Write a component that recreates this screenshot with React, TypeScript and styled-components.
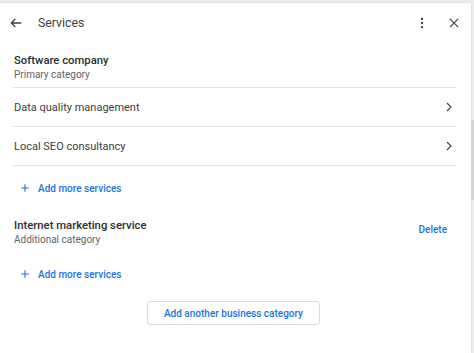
import React from 'react';
import styled, { createGlobalStyle } from 'styled-components';

const GlobalStyle = createGlobalStyle`
  html, body {
    margin: 0;
    padding: 0;
    background: #ececec;
    font-family: Roboto, "Liberation Sans", Arial, sans-serif;
  }
`

const Page = styled.div`
  display: flex;
  width: 474px;
  height: 353px;
  overflow: hidden;
`

const Dialog = styled.div`
  width: 471px;
  margin-top: 3px;
  background: #fff;
  box-shadow: 0 0 2px rgba(0, 0, 0, 0.12);
  display: flex;
  flex-direction: column;
`

const Track = styled.div`
  flex: 1;
  padding-top: 120px;
`

const Thumb = styled.div`
  height: 80px;
  background: #d4d4d4;
`

const Header = styled.div`
  height: 40px;
  display: flex;
  align-items: center;
  padding: 0 10px 0 9px;
`

const IconButton = styled.button`
  width: 14px;
  height: 14px;
  padding: 0;
  border: 0;
  background: none;
  display: flex;
  align-items: center;
  justify-content: center;
  color: #3c4043;
`

const Title = styled.div`
  flex: 1;
  margin-left: 15px;
  font-size: 12.3px;
  color: #3c4043;
`

const HeaderActions = styled.div`
  display: flex;
  align-items: center;
  gap: 18px;
`

const Body = styled.div`
  padding: 0 15px 0 13px;
  display: flex;
  flex-direction: column;
`

const CategoryHead = styled.div<{ $divider?: boolean }>`
  display: flex;
  align-items: flex-start;
  justify-content: space-between;
  padding: ${(p) => (p.$divider ? '10px 1px 5px' : '8px 1px 5px')};
  border-bottom: ${(p) => (p.$divider ? '1px solid #e2e3e5' : 'none')};
`

const CategoryName = styled.div`
  font-size: 11.3px;
  font-weight: 500;
  color: #2b2d30;
  line-height: 15px;
`

const CategoryType = styled.div`
  font-size: 10px;
  color: #5f6368;
  line-height: 14px;
`

const ServiceRow = styled.div`
  height: 38px;
  display: flex;
  align-items: center;
  justify-content: space-between;
  padding: 0 1px;
  border-bottom: 1px solid #e2e3e5;
  font-size: 11px;
  color: #3c4043;
`

const AddLink = styled.a`
  display: flex;
  align-items: center;
  gap: 8px;
  height: 44px;
  padding-left: 7px;
  font-size: 10px;
  font-weight: 500;
  color: #1a73e8;
  text-decoration: none;
`

const TextButton = styled.a`
  font-size: 10px;
  font-weight: 500;
  color: #1a73e8;
  margin-top: 6px;
  margin-right: 8px;
`

const Footer = styled.div`
  display: flex;
  justify-content: center;
  padding-top: 5px;
  padding-right: 2px;
`

const OutlineButton = styled.button`
  width: 173px;
  height: 24px;
  border: 1px solid #dadce0;
  border-radius: 3px;
  background: #fff;
  font-family: inherit;
  font-size: 10px;
  font-weight: 500;
  color: #1a73e8;
`

const Chevron = () => (
  <svg width="12" height="12" viewBox="0 0 24 24" fill="none" stroke="#3c4043" strokeWidth="2.2">
    <path d="M8 4l8 8-8 8" />
  </svg>
)

const Plus = () => (
  <svg width="10" height="10" viewBox="0 0 24 24" stroke="#1a73e8" strokeWidth="2.6">
    <path d="M12 3v18M3 12h18" />
  </svg>
)

const services = ['Data quality management', 'Local SEO consultancy']

export default function App() {
  return (
    <Page>
      <GlobalStyle />
      <Dialog>
        <Header>
          <IconButton>
            <svg width="14" height="14" viewBox="0 0 24 24" fill="none" stroke="#3c4043" strokeWidth="2.2">
              <path d="M21 12H4M11 5l-7 7 7 7" />
            </svg>
          </IconButton>
          <Title>Services</Title>
          <HeaderActions>
            <IconButton>
              <svg width="14" height="14" viewBox="0 0 24 24" fill="#3c4043">
                <circle cx="12" cy="5" r="2" />
                <circle cx="12" cy="12" r="2" />
                <circle cx="12" cy="19" r="2" />
              </svg>
            </IconButton>
            <IconButton>
              <svg width="14" height="14" viewBox="0 0 24 24" fill="none" stroke="#3c4043" strokeWidth="2.2">
                <path d="M5 5l14 14M19 5L5 19" />
              </svg>
            </IconButton>
          </HeaderActions>
        </Header>
        <Body>
          <CategoryHead $divider>
            <div>
              <CategoryName>Software company</CategoryName>
              <CategoryType>Primary category</CategoryType>
            </div>
          </CategoryHead>
          {services.map((s) => (
            <ServiceRow key={s}>
              {s}
              <Chevron />
            </ServiceRow>
          ))}
          <AddLink>
            <Plus />
            Add more services
          </AddLink>
          <CategoryHead>
            <div>
              <CategoryName>Internet marketing service</CategoryName>
              <CategoryType>Additional category</CategoryType>
            </div>
            <TextButton>Delete</TextButton>
          </CategoryHead>
          <AddLink>
            <Plus />
            Add more services
          </AddLink>
          <Footer>
            <OutlineButton>Add another business category</OutlineButton>
          </Footer>
        </Body>
      </Dialog>
      <Track>
        <Thumb />
      </Track>
    </Page>
  );
}
